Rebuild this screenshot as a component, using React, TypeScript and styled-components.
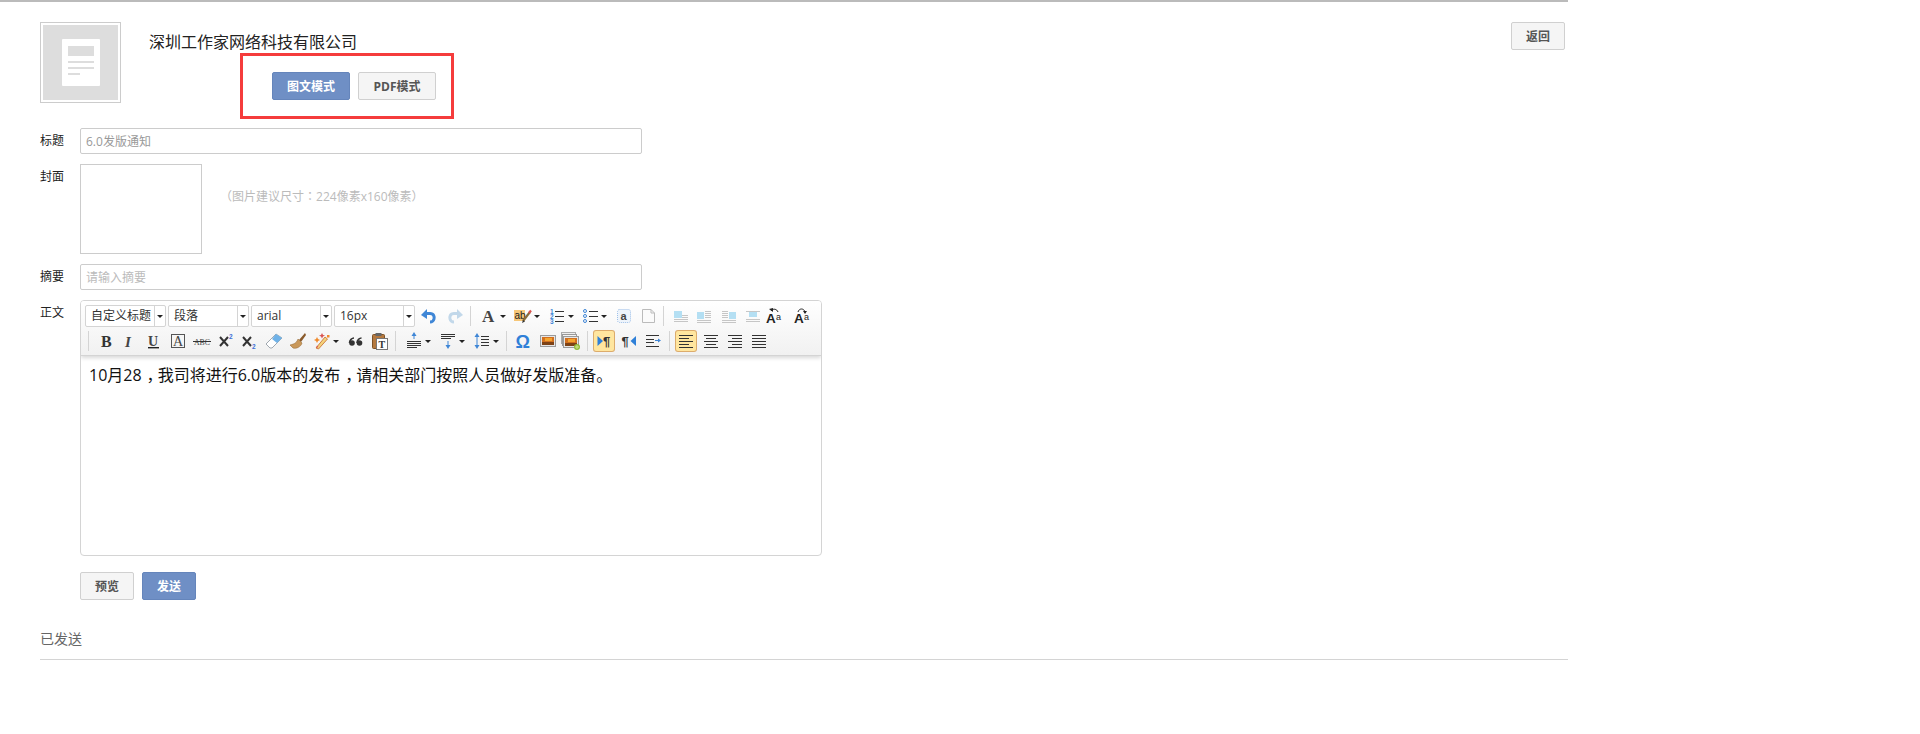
import * as React from "react"
import styled, { createGlobalStyle } from "styled-components"

const stack = `"Open Sans", "Noto Sans CJK SC", sans-serif`

const GlobalStyle = createGlobalStyle`
  html, body {
    margin: 0;
    background: #fff;
    font-family: "Open Sans", "Noto Sans CJK SC", sans-serif;
    font-size: 12px;
    color: #333;
    text-spacing-trim: space-all;
  }
`

const Page = styled.div`
  border-top: 2px solid #bbb;
  padding-left: 40px;
  width: 1528px;
`

const Header = styled.header`
  position: relative;
  display: flex;
  padding-top: 20px;
  height: 81px;
`

const Logo = styled.div`
  box-sizing: border-box;
  width: 81px;
  height: 81px;
  border: 1px solid #ccc;
  padding: 2px;
  background: #fff;

  svg {
    display: block;
  }
`

const Company = styled.div`
  margin-left: 28px;
`

const CompanyName = styled.div`
  font-size: 16px;
  line-height: 40px;
  color: #222;
`

const ModeRow = styled.div`
  display: flex;
  gap: 8px;
  margin-top: 10px;
  margin-left: 123px;
`

const Btn = styled.button<{ $primary?: boolean; $w?: number }>`
  box-sizing: border-box;
  width: ${(p) => p.$w ?? 54}px;
  height: 28px;
  padding: 0;
  border-radius: 2px;
  border: 1px solid ${(p) => (p.$primary ? "#6585bb" : "#d0d0d0")};
  background: ${(p) => (p.$primary ? "#6f8fc5" : "#f5f5f5")};
  color: ${(p) => (p.$primary ? "#fff" : "#555")};
  font: bold 12px ${stack};
`

const BackBtn = styled(Btn)`
  margin-left: auto;
  margin-right: 3px;
`

const Annotation = styled.div`
  position: absolute;
  box-sizing: border-box;
  left: 200px;
  top: 51px;
  width: 214px;
  height: 66px;
  border: 3px solid #f53c3c;
  pointer-events: none;
`

const Form = styled.div`
  display: flex;
  flex-direction: column;
  gap: 10px;
  margin-top: 25px;
`

const Row = styled.div`
  display: flex;
  align-items: flex-start;
`

const Label = styled.label`
  flex: none;
  width: 40px;
  line-height: 26px;
  color: #222;
`

const TextInput = styled.input`
  box-sizing: border-box;
  width: 562px;
  height: 26px;
  padding: 0 5px;
  border: 1px solid #ccc;
  border-radius: 2px;
  outline: none;
  color: #999;
  font: 12px ${stack};

  &::placeholder {
    color: #bbb;
    opacity: 1;
  }
`

const Cover = styled.div`
  box-sizing: border-box;
  width: 122px;
  height: 90px;
  border: 1px solid #ccc;
`

const Hint = styled.div`
  margin-left: 18px;
  padding-top: 19px;
  line-height: 26px;
  color: #bbb;
`

// centred fullwidth punctuation, as in the original face
const Fw = styled.span`
  font-family: "Noto Sans CJK TC", sans-serif;
`

// half-width comma padded back to a full cell, so it sits low and in the middle
const Comma = styled.span`
  font-feature-settings: "halt";
  padding: 0 3px 0 5px;
`

const Editor = styled.div`
  box-sizing: border-box;
  width: 742px;
  height: 256px;
  border: 1px solid #d4d4d4;
  border-radius: 4px;
  overflow: hidden;
`

const Toolbar = styled.div`
  box-sizing: border-box;
  height: 55px;
  padding: 4px 4px 5px;
  background: linear-gradient(to bottom, #fff, #f1f1f1);
  border-bottom: 1px solid #d4d4d4;
  box-shadow: 0 2px 4px #d8d8d8;
`

const ToolRow = styled.div`
  display: flex;
  align-items: center;
  height: 22px;

  & + & {
    margin-top: 3px;
  }
`

const Combo = styled.div`
  display: flex;
  box-sizing: border-box;
  width: 81px;
  height: 22px;
  margin-right: 2px;
  border: 1px solid #d4d4d4;
  border-radius: 2px;
  background: #fff;
  line-height: 20px;
  color: #333;
`

const ComboText = styled.span`
  flex: 1;
  padding-left: 5px;
  white-space: nowrap;
`

const ComboArrow = styled.span`
  display: flex;
  align-items: center;
  justify-content: center;
  width: 10px;
  border-left: 1px solid #d4d4d4;
`

const Caret = styled.i<{ $w?: number }>`
  display: block;
  flex: none;
  width: 0;
  height: 0;
  margin: 0 ${(p) => p.$w ?? 1}px;
  border-top: 3px solid #222;
  border-left: 3px solid transparent;
  border-right: 3px solid transparent;
`

const Tool = styled.span<{ $ml: number; $active?: boolean }>`
  flex: none;
  display: block;
  width: 20px;
  height: 20px;
  margin-left: ${(p) => p.$ml}px;
  border-radius: 2px;
  background: ${(p) => (p.$active ? "#ffe69f" : "transparent")};
  box-shadow: ${(p) => (p.$active ? "0 0 0 1px #dcac6c" : "none")};

  svg {
    display: block;
  }
`

const Sep = styled.span<{ $ml: number }>`
  flex: none;
  width: 1px;
  height: 20px;
  margin-left: ${(p) => p.$ml}px;
  background: #d4d4d4;
`

const Content = styled.div`
  padding: 7px 8px;
  font-size: 16px;
  line-height: 24px;
  color: #111;
`

const Actions = styled.div`
  display: flex;
  gap: 8px;
  margin-top: 16px;
  margin-left: 40px;
`

const Sent = styled.div`
  box-sizing: border-box;
  height: 60px;
  padding-top: 29px;
  line-height: 20px;
  font-size: 14px;
  color: #666;
  border-bottom: 1px solid #d4d4d4;
`

type SvgProps = { children: React.ReactNode }
const Ico = ({ children }: SvgProps) => (
  <svg width="20" height="20" viewBox="0 0 20 20" fill="none">
    {children}
  </svg>
)

const Lines = ({ x, w, ys, color = "#333" }: { x: number; w: number | number[]; ys: number[]; color?: string }) => (
  <>
    {ys.map((y, i) => (
      <rect key={y} x={x} y={y} width={Array.isArray(w) ? w[i] : w} height="1" fill={color} />
    ))}
  </>
)

const serif = "Liberation Serif, serif"
const sans = "Liberation Sans, sans-serif"

type Bar = [number, number, number]

const FloatIcon = ({ box, bars }: { box: [number, number, number, number]; bars: Bar[] }) => (
  <Ico>
    {bars.map(([x, y, w]) => (
      <rect key={`${x}-${y}`} x={x} y={y} width={w} height="1" fill="#c6c6c6" />
    ))}
    <rect x={box[0]} y={box[1]} width={box[2]} height={box[3]} fill="#b4dff3" />
  </Ico>
)

const AaIcon = ({ flip }: { flip?: boolean }) => (
  <Ico>
    <text x="2" y="17" fontFamily={sans} fontWeight="bold" fontSize="13.5" fill="#222">A</text>
    <text x="12" y="14" fontFamily={sans} fontSize="9" fill="#222">a</text>
    <path d={flip ? "M6 6 C7 2 12 2 13 6" : "M7 5 C9 2 13 3 14 6"} stroke="#222" />
    <path d={flip ? "M11 5 L15 5 L13 8 Z" : "M5 3 L9 2 L9 6 Z"} fill="#222" />
  </Ico>
)

const Picture = () => (
  <>
    <rect x="0.5" y="0.5" width="15" height="11" fill="#e6e6e6" stroke="#9a9a9a" />
    <rect x="2" y="2" width="12" height="8" fill="#d2701f" />
    <rect x="5" y="3" width="7" height="3" fill="#f4a52e" />
    <rect x="2" y="7" width="12" height="3" fill="#7d4216" />
  </>
)

const icons: Record<string, React.ReactNode> = {
  undo: (
    <Ico>
      <path d="M8 7.5 H11 C15 7.5 15.5 11 15 13 C14.5 15 12.5 16 11 16" stroke="#3f86d6" strokeWidth="3" />
      <path d="M2 9 L8 3 V13 Z" fill="#3f86d6" />
    </Ico>
  ),
  redo: (
    <Ico>
      <path d="M12 7.5 H9 C5 7.5 4.5 11 5 13 C5.5 15 7.5 16 9 16" stroke="#c2d8ea" strokeWidth="3" />
      <path d="M18 9 L12 3 V13 Z" fill="#c2d8ea" />
    </Ico>
  ),
  color: (
    <Ico>
      <text x="3" y="16" fontFamily={serif} fontWeight="bold" fontSize="17" fill="#444">A</text>
    </Ico>
  ),
  highlight: (
    <Ico>
      <rect x="1" y="4" width="11" height="11" fill="#f7c778" />
      <text x="1.5" y="13" fontFamily={sans} fontSize="10" fill="#222">ab</text>
      <path d="M10 15 L17 6" stroke="#8a6d3b" strokeWidth="2.2" />
      <path d="M16 7 L18 4.5" stroke="#d9534f" strokeWidth="2.2" />
      <path d="M9 17 L10 14 L12 15.5 Z" fill="#333" />
    </Ico>
  ),
  ol: (
    <Ico>
      <text x="3" y="8" fontFamily={sans} fontWeight="bold" fontSize="6.5" fill="#3f86d6">1</text>
      <text x="3" y="13" fontFamily={sans} fontWeight="bold" fontSize="6.5" fill="#3f86d6">2</text>
      <text x="3" y="18" fontFamily={sans} fontWeight="bold" fontSize="6.5" fill="#3f86d6">3</text>
      <Lines x={8} w={9} ys={[5, 10, 15]} />
    </Ico>
  ),
  ul: (
    <Ico>
      <circle cx="5" cy="5" r="1.5" stroke="#3f86d6" />
      <circle cx="5" cy="10" r="1.5" stroke="#3f86d6" />
      <circle cx="5" cy="15" r="1.5" stroke="#3f86d6" />
      <Lines x={9} w={9} ys={[5, 10, 15]} />
    </Ico>
  ),
  directionalA: (
    <Ico>
      <rect x="3.5" y="3.5" width="13" height="13" rx="2" fill="#eef4fb" stroke="#9cbfe8" strokeDasharray="1 1" />
      <text x="6.5" y="14" fontFamily={sans} fontWeight="bold" fontSize="11" fill="#444">a</text>
    </Ico>
  ),
  page: (
    <Ico>
      <path d="M4.5 3.5 H13 L16.5 7 V16.5 H4.5 Z" fill="#fbfbfb" stroke="#bbb" />
      <path d="M13 3.5 V7 H16.5" stroke="#bbb" />
    </Ico>
  ),
  floatNone: <FloatIcon box={[3, 5, 8, 7]} bars={[[11, 9, 6], [11, 11, 6], [3, 13, 14], [3, 15, 14]]} />,
  floatLeft: (
    <FloatIcon box={[3, 6, 7, 7]} bars={[[11, 5, 6], [11, 7, 6], [11, 9, 6], [11, 11, 6], [3, 14, 14], [3, 16, 14]]} />
  ),
  floatRight: (
    <FloatIcon box={[10, 6, 7, 7]} bars={[[3, 5, 6], [3, 7, 6], [3, 9, 6], [3, 11, 6], [3, 14, 14], [3, 16, 14]]} />
  ),
  floatCenter: <FloatIcon box={[6, 6, 8, 5]} bars={[[3, 5, 14], [3, 13, 14], [3, 15, 14]]} />,
  caseUp: <AaIcon />,
  caseDown: <AaIcon flip />,
  bold: (
    <Ico>
      <text x="4" y="16" fontFamily={serif} fontWeight="bold" fontSize="16" fill="#333">B</text>
    </Ico>
  ),
  italic: (
    <Ico>
      <text x="6" y="15.5" fontFamily={serif} fontStyle="italic" fontWeight="bold" fontSize="15" fill="#444">I</text>
    </Ico>
  ),
  underline: (
    <Ico>
      <text x="4" y="14.5" fontFamily={serif} fontWeight="bold" fontSize="14" fill="#444">U</text>
      <rect x="4" y="16" width="11" height="1.4" fill="#222" />
    </Ico>
  ),
  boxA: (
    <Ico>
      <rect x="3.5" y="3.5" width="13" height="13" stroke="#555" />
      <text x="5" y="15" fontFamily={serif} fontSize="14" fill="#444">A</text>
    </Ico>
  ),
  strike: (
    <Ico>
      <text x="2" y="14" fontFamily={serif} fontSize="9" textLength="16" lengthAdjust="spacingAndGlyphs" fill="#444">ABC</text>
      <rect x="1" y="10" width="18" height="1" fill="#333" />
    </Ico>
  ),
  sup: (
    <Ico>
      <path d="M4 6 L12 15 M12 6 L4 15" stroke="#333" strokeWidth="2" />
      <text x="13" y="8" fontFamily={sans} fontWeight="bold" fontSize="6.5" fill="#3f6fd6">2</text>
    </Ico>
  ),
  sub: (
    <Ico>
      <path d="M3 6 L11 15 M11 6 L3 15" stroke="#333" strokeWidth="2" />
      <text x="12" y="18" fontFamily={sans} fontWeight="bold" fontSize="6.5" fill="#3f6fd6">2</text>
    </Ico>
  ),
  eraser: (
    <Ico>
      <path d="M2 13 L12 3 L18 7 L8 17 H6 Z" fill="#fff" stroke="#a0a8b0" />
      <path d="M8 8 L12 3 L18 7 L13 12 Z" fill="#6fb2e8" />
    </Ico>
  ),
  brush: (
    <Ico>
      <path d="M11 9 L17 2 L18 4 L13 11 Z" fill="#8a5a2b" />
      <path d="M2 14 C7 13 9 11 10 8 L14 12 C13 16 8 18 5 17 Z" fill="#c9985a" stroke="#9b6f3a" strokeWidth="0.6" />
    </Ico>
  ),
  wand: (
    <Ico>
      <path d="M4 17 L13 6 L15.5 8 L6.5 18 Z" fill="#f4d27a" stroke="#c66a2b" strokeWidth="0.8" />
      <path d="M4 17 L5 14.5 L6.5 16 Z" fill="#d9534f" />
      <path d="M5 6 L6 8 L8 9 L6 10 L5 12 L4 10 L2 9 L4 8 Z" fill="#f08a2b" />
      <path d="M10 2 L11 4 L13 4.5 L11 5.5 L10 7.5 L9 5.5 L7 4.5 L9 4 Z" fill="#d9534f" />
      <rect x="15" y="4" width="2.5" height="2.5" fill="#f08a2b" />
    </Ico>
  ),
  quotes: (
    <Ico>
      <circle cx="6" cy="12" r="2.8" fill="#333" />
      <path d="M3.5 12 C3.5 9 6 7 8 7" stroke="#333" strokeWidth="1.6" />
      <circle cx="13.5" cy="12" r="2.8" fill="#333" />
      <path d="M11 12 C11 9 13.5 7 15.5 7" stroke="#333" strokeWidth="1.6" />
    </Ico>
  ),
  paste: (
    <Ico>
      <rect x="2.5" y="3.5" width="12" height="14" rx="1" fill="#b5793f" stroke="#7d5226" />
      <rect x="5.5" y="2" width="6" height="3" fill="#666" />
      <rect x="6.5" y="7.5" width="11" height="11" fill="#fff" stroke="#777" />
      <text x="8.5" y="16.5" fontFamily={serif} fontWeight="bold" fontSize="10" fill="#333">T</text>
    </Ico>
  ),
  spaceTop: (
    <Ico>
      <path d="M10 1 L12.5 5 H7.5 Z" fill="#3f86d6" />
      <rect x="9.5" y="4" width="1" height="4" fill="#3f86d6" />
      <Lines x={3} w={[14, 14, 14, 10]} ys={[10, 12, 14, 16]} />
    </Ico>
  ),
  spaceBottom: (
    <Ico>
      <Lines x={3} w={[14, 14, 10]} ys={[3, 5, 7]} />
      <path d="M10 18 L12.5 14 H7.5 Z" fill="#3f86d6" />
      <rect x="9.5" y="10" width="1" height="5" fill="#3f86d6" />
    </Ico>
  ),
  lineHeight: (
    <Ico>
      <path d="M5 2 L7.5 6 H2.5 Z M5 18 L7.5 14 H2.5 Z" fill="#3f86d6" />
      <rect x="4.5" y="5" width="1" height="10" fill="#3f86d6" />
      <Lines x={9} w={8} ys={[5, 8, 11, 14]} />
    </Ico>
  ),
  omega: (
    <Ico>
      <text x="1.5" y="16.5" fontFamily={sans} fontWeight="bold" fontSize="18" fill="#2f80d8">Ω</text>
    </Ico>
  ),
  image: (
    <Ico>
      <g transform="translate(2 4)">
        <Picture />
      </g>
    </Ico>
  ),
  multiImage: (
    <Ico>
      <rect x="0.5" y="1.5" width="14" height="11" fill="#eee" stroke="#aaa" />
      <rect x="1.5" y="3.5" width="14" height="11" fill="#f4f4f4" stroke="#999" />
      <g transform="translate(2 5)">
        <Picture />
      </g>
      <circle cx="16" cy="16" r="3" fill="#8fbb3a" />
      <path d="M14 16 H18 M16 14 V18" stroke="#cfe78f" />
    </Ico>
  ),
  ltr: (
    <Ico>
      <path d="M3.5 5 L9 10 L3.5 15 Z" fill="#2f80d8" />
      <text x="9" y="15" fontFamily={sans} fontWeight="bold" fontSize="13" fill="#333">¶</text>
    </Ico>
  ),
  rtl: (
    <Ico>
      <text x="2.5" y="15" fontFamily={sans} fontWeight="bold" fontSize="13" fill="#333">¶</text>
      <path d="M17 5 L11.5 10 L17 15 Z" fill="#2f80d8" />
    </Ico>
  ),
  indent: (
    <Ico>
      <Lines x={3} w={[13, 8, 8, 13]} ys={[4, 8, 11, 15]} />
      <path d="M12 9 H15 V7.5 L18 9.5 L15 11.5 V10 H12 Z" fill="#3f86d6" />
    </Ico>
  ),
  alignLeft: (
    <Ico>
      <Lines x={3} w={[14, 10, 14, 10, 14]} ys={[4, 7, 10, 13, 16]} />
    </Ico>
  ),
  alignCenter: (
    <Ico>
      <Lines x={3} w={14} ys={[4, 10, 16]} />
      <Lines x={5} w={10} ys={[7, 13]} />
    </Ico>
  ),
  alignRight: (
    <Ico>
      <Lines x={3} w={14} ys={[4, 10, 16]} />
      <Lines x={7} w={10} ys={[7, 13]} />
    </Ico>
  ),
  justify: (
    <Ico>
      <Lines x={3} w={14} ys={[4, 7, 10, 13, 16]} />
    </Ico>
  ),
}

type Item = { icon?: string; ml: number; caret?: boolean; active?: boolean }

const rowOne: Item[] = [
  { icon: "undo", ml: 2 },
  { icon: "redo", ml: 6 },
  { ml: 5 },
  { icon: "color", ml: 8, caret: true },
  { icon: "highlight", ml: 6, caret: true },
  { icon: "ol", ml: 6, caret: true },
  { icon: "ul", ml: 5, caret: true },
  { icon: "directionalA", ml: 6 },
  { icon: "page", ml: 4 },
  { ml: 5 },
  { icon: "floatNone", ml: 7 },
  { icon: "floatLeft", ml: 3 },
  { icon: "floatRight", ml: 5 },
  { icon: "floatCenter", ml: 4 },
  { icon: "caseUp", ml: 1 },
  { icon: "caseDown", ml: 8 },
]

const rowTwo: Item[] = [
  { ml: 3 },
  { icon: "bold", ml: 8 },
  { icon: "italic", ml: 2 },
  { icon: "underline", ml: 5 },
  { icon: "boxA", ml: 4 },
  { icon: "strike", ml: 4 },
  { icon: "sup", ml: 4 },
  { icon: "sub", ml: 4 },
  { icon: "eraser", ml: 4 },
  { icon: "brush", ml: 4 },
  { icon: "wand", ml: 4, caret: true },
  { icon: "quotes", ml: 6 },
  { icon: "paste", ml: 4 },
  { ml: 5 },
  { icon: "spaceTop", ml: 8, caret: true },
  { icon: "spaceBottom", ml: 6, caret: true },
  { icon: "lineHeight", ml: 6, caret: true },
  { ml: 6 },
  { icon: "omega", ml: 7 },
  { icon: "image", ml: 4 },
  { icon: "multiImage", ml: 3 },
  { ml: 6 },
  { icon: "ltr", ml: 6, active: true },
  { icon: "rtl", ml: 5 },
  { icon: "indent", ml: 4 },
  { ml: 6 },
  { icon: "alignLeft", ml: 6, active: true },
  { icon: "alignCenter", ml: 5 },
  { icon: "alignRight", ml: 4 },
  { icon: "justify", ml: 4 },
]

const renderItems = (items: Item[]) =>
  items.map((it, i) =>
    it.icon ? (
      <React.Fragment key={i}>
        <Tool $ml={it.ml} $active={it.active}>
          {icons[it.icon]}
        </Tool>
        {it.caret && <Caret />}
      </React.Fragment>
    ) : (
      <Sep key={i} $ml={it.ml} />
    )
  )

const combos = ["自定义标题", "段落", "arial", "16px"]

export default function App() {
  return (
    <>
      <GlobalStyle />
      <Page>
        <Header>
          <Logo>
            <svg width="75" height="75" viewBox="0 0 75 75">
              <rect width="75" height="75" fill="#ddd" />
              <rect x="19" y="14" width="38" height="47" rx="1" fill="#fff" />
              <rect x="25" y="21" width="26" height="10" fill="#ddd" />
              <rect x="25" y="36" width="26" height="2" fill="#ddd" />
              <rect x="25" y="42" width="26" height="2" fill="#ddd" />
              <rect x="25" y="48" width="12" height="2" fill="#ddd" />
            </svg>
          </Logo>
          <Company>
            <CompanyName>深圳工作家网络科技有限公司</CompanyName>
            <ModeRow>
              <Btn $primary $w={78}>图文模式</Btn>
              <Btn $w={78}>PDF模式</Btn>
            </ModeRow>
          </Company>
          <BackBtn>返回</BackBtn>
          <Annotation />
        </Header>
        <Form>
          <Row>
            <Label>标题</Label>
            <TextInput readOnly value="6.0发版通知" />
          </Row>
          <Row>
            <Label>封面</Label>
            <Cover />
            <Hint>
              <Fw>（</Fw>图片建议尺寸<Fw>：</Fw>224像素x160像素<Fw>）</Fw>
            </Hint>
          </Row>
          <Row>
            <Label>摘要</Label>
            <TextInput readOnly placeholder="请输入摘要" />
          </Row>
          <Row>
            <Label>正文</Label>
            <Editor>
              <Toolbar>
                <ToolRow>
                  {combos.map((c) => (
                    <Combo key={c}>
                      <ComboText>{c}</ComboText>
                      <ComboArrow>
                        <Caret $w={0} />
                      </ComboArrow>
                    </Combo>
                  ))}
                  {renderItems(rowOne)}
                </ToolRow>
                <ToolRow>{renderItems(rowTwo)}</ToolRow>
              </Toolbar>
              <Content>
                10月28<Comma>，</Comma>我司将进行6.0版本的发布<Comma>，</Comma>请相关部门按照人员做好发版准备。
              </Content>
            </Editor>
          </Row>
        </Form>
        <Actions>
          <Btn>预览</Btn>
          <Btn $primary>发送</Btn>
        </Actions>
        <Sent>已发送</Sent>
      </Page>
    </>
  )
}
